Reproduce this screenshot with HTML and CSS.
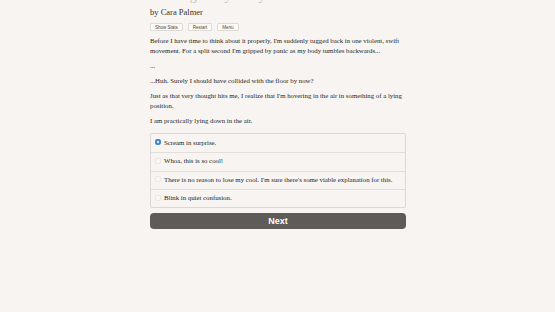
FILE: index.html
```html
<!DOCTYPE html>
<html>
<head>
	<link rel="stylesheet" href="styles.css">
</head>
<body>
	<div class="container">
		<div class="header">
			<h1 class="title">Floating Away Story</h1>
			<h2 class="author">by Cara Palmer</h2>
			<div class="buttons">
				<button class="spacedLink">Show Stats</button>
				<button class="spacedLink">Restart</button>
				<button class="spacedLink">Menu</button>
			</div>
		</div>
		<div id="text">
			<p>Before I have time to think about it properly, I'm suddenly tugged back in one violent, swift movement. For a split second I'm gripped by panic as my body tumbles backwards...</p>
			<p>...</p>
			<p>...Huh. Surely I should have collided with the floor by now?</p>
			<p>Just as that very thought hits me, I realize that I'm hovering in the air in something of a lying position.</p>
			<p>I am practically lying down in the air.</p>
		</div>
		<form class="choice">
			<label class="option"><input type="radio" name="choice" checked> Scream in surprise.</label>
			<label class="option"><input type="radio" name="choice"> Whoa, this is so cool!</label>
			<label class="option"><input type="radio" name="choice"> There is no reason to lose my cool. I'm sure there's some viable explanation for this.</label>
			<label class="option"><input type="radio" name="choice"> Blink in quiet confusion.</label>
		</form>
		<button class="next">Next</button>
	</div>
</body>
</html>
```
FILE: styles.css
```css
html, body {
	margin: 0;
	background: #f7f4f1;
	color: #1f1f1f;
	font-family: "Liberation Serif", serif;
}

.container {
	width: 256px;
	margin: 0 auto;
	padding-left: 1px;
}

.title {
	margin: -11px 0 0;
	font-size: 14px;
	line-height: 14px;
	font-weight: normal;
	color: #c4c0bc;
}

.author {
	margin: 4px 0 0;
	font-size: 8.5px;
	line-height: 10px;
	font-weight: normal;
	color: #333;
}

.buttons {
	display: flex;
	gap: 5px;
	margin-top: 6px;
}

.spacedLink {
	font-family: "Liberation Sans", sans-serif;
	font-size: 4.5px;
	padding: 0 4px;
	height: 8px;
	background: #fbfaf8;
	border: 1px solid #dedad6;
	border-radius: 1px;
	color: #444;
}

#text {
	margin-top: 5px;
	font-size: 6.8px;
	line-height: 10px;
}

#text p {
	margin: 0 0 5px;
}

.choice {
	margin-top: 7px;
	border: 1px solid #dcd8d4;
	border-radius: 2px;
	font-size: 6.8px;
}

.option {
	display: flex;
	align-items: center;
	height: 18.3px;
	padding: 0 0 2px 4px;
	border-top: 1px solid #e2deda;
	box-sizing: border-box;
}

.option:first-child {
	border-top: none;
}

.option input {
	appearance: none;
	width: 6px;
	height: 6px;
	margin: 0 3px 0 0;
	border: 1px solid #ebe8e5;
	border-radius: 1px;
	background: #f9f7f5;
}

.option input:checked {
	border: none;
	border-radius: 50%;
	background: #3d7fd3;
	box-shadow: inset 0 0 0 1.8px #3d7fd3, inset 0 0 0 3px #dbe7f6;
}

.next {
	display: block;
	width: 100%;
	height: 16px;
	margin-top: 5px;
	background: #5f5b59;
	color: #fff;
	border: none;
	border-radius: 4px;
	font-family: "Liberation Sans", sans-serif;
	font-weight: bold;
	font-size: 9px;
}
```
